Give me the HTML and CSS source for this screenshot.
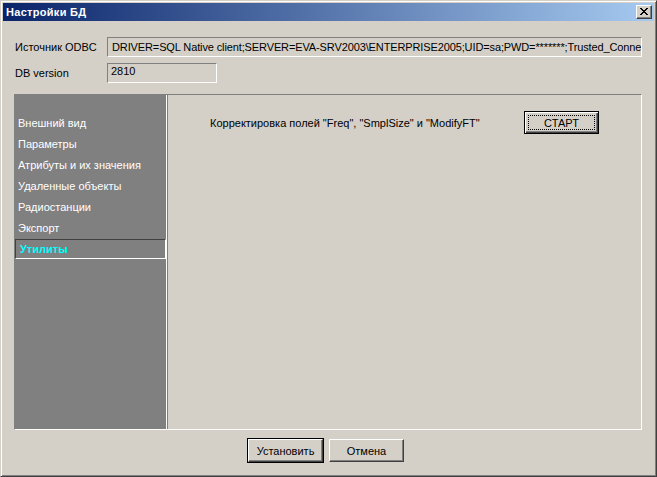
FILE: index.html
```html
<!DOCTYPE html>
<html>
<head>
    <title>Настройки БД</title>
    <link rel="stylesheet" href="styles.css">
</head>
<body>

<div class="window">
    <div class="titlebar">
        <span class="title">Настройки БД</span>
        <button class="close-btn">
            <svg width="8" height="7" viewBox="0 0 8 7" shape-rendering="crispEdges">
                <path d="M0 0h2v1H0z M6 0h2v1H6z M1 1h2v1H1z M5 1h2v1H5z M2 2h4v1H2z M3 3h2v1H3z M2 4h4v1H2z M1 5h2v1H1z M5 5h2v1H5z M0 6h2v1H0z M6 6h2v1H6z" fill="#000"/>
            </svg>
        </button>
    </div>

    <div class="content">
        <div class="field">
            <label class="field-label">Источник ODBC</label>
            <div class="readonly-box odbc">DRIVER=SQL Native client;SERVER=EVA-SRV2003\ENTERPRISE2005;UID=sa;PWD=*******;Trusted_Conne</div>
        </div>
        <div class="field version-field">
            <label class="field-label">DB version</label>
            <div class="readonly-box version">2810</div>
        </div>

        <div class="panel">
            <ul class="nav-list">
                <li class="nav-item">Внешний вид</li>
                <li class="nav-item">Параметры</li>
                <li class="nav-item">Атрибуты и их значения</li>
                <li class="nav-item">Удаленные объекты</li>
                <li class="nav-item">Радиостанции</li>
                <li class="nav-item">Экспорт</li>
                <li class="nav-item selected">Утилиты</li>
            </ul>
            <div class="pane">
                <div class="tool-row">
                    <span class="tool-label">Корректировка полей "Freq", "SmplSize" и "ModifyFT"</span>
                    <button class="btn start-btn"><span class="focus-rect">СТАРТ</span></button>
                </div>
            </div>
        </div>

        <div class="buttons">
            <button class="btn default-btn">Установить</button>
            <button class="btn">Отмена</button>
        </div>
    </div>
</div>

</body>
</html>
```

FILE: styles.css
```css
body {
    margin: 0;
    background-color: #d4d0c8;
    font-family: "Liberation Sans", Arial, sans-serif;
    font-size: 11px;
    color: #000;
}
.window {
    width: 657px;
    height: 477px;
    box-sizing: border-box;
    border: 1px solid;
    border-color: #d4d0c8 #404040 #404040 #d4d0c8;
    box-shadow: inset 1px 1px #ffffff, inset -1px -1px #808080;
    padding: 2px;
    background-color: #d4d0c8;
    display: flex;
    flex-direction: column;
}
.titlebar {
    height: 18px;
    display: flex;
    align-items: center;
    justify-content: space-between;
    padding-left: 3px;
    padding-right: 2px;
    background: linear-gradient(to right, #0a246a, #a6caf0);
}
.title {
    color: #ffffff;
    font-weight: bold;
    font-size: 11px;
    letter-spacing: 0.3px;
}
.close-btn {
    width: 16px;
    height: 14px;
    padding: 0;
    margin: 0;
    box-sizing: border-box;
    border: 1px solid;
    border-color: #ffffff #404040 #404040 #ffffff;
    box-shadow: inset -1px -1px #808080;
    background-color: #d4d0c8;
    display: flex;
    align-items: center;
    justify-content: center;
}
.close-btn svg {
    display: block;
    margin-left: -1px;
    margin-top: -1px;
}
.content {
    flex: 1;
    padding: 16px 12px 0 11px;
    display: flex;
    flex-direction: column;
}
.field {
    display: flex;
    align-items: center;
    height: 20px;
}
.version-field {
    margin-top: 6px;
}
.field-label {
    width: 92px;
    padding-left: 1px;
}
.readonly-box {
    height: 20px;
    box-sizing: border-box;
    border: 1px solid;
    border-color: #808080 #ffffff #ffffff #808080;
    padding: 0 4px;
    white-space: nowrap;
    overflow: hidden;
}
.odbc {
    width: 535px;
    line-height: 18px;
    padding-right: 0;
    letter-spacing: -0.12px;
}
.version {
    width: 110px;
    line-height: 14px;
    padding-left: 3px;
}
.panel {
    margin-top: 11px;
    height: 336px;
    box-sizing: border-box;
    border: 1px solid;
    border-color: #808080 #ffffff #ffffff #808080;
    display: flex;
}
.nav-list {
    list-style: none;
    margin: 0;
    padding: 18px 0 0 0;
    width: 152px;
    box-sizing: border-box;
    background-color: #808080;
    border-right: 1px solid #ffffff;
}
.nav-item {
    height: 21px;
    line-height: 21px;
    padding-left: 3px;
    color: #ffffff;
    white-space: nowrap;
}
.nav-item.selected {
    height: 20px;
    line-height: 18px;
    box-sizing: border-box;
    border: 1px solid;
    border-color: #404040 #ffffff #ffffff #404040;
    padding-left: 4px;
    color: #00ffff;
    font-weight: bold;
}
.pane {
    flex: 1;
    border-left: 1px solid #808080;
    padding: 16px 0 0 42px;
}
.tool-row {
    display: flex;
    align-items: center;
}
.tool-label {
    width: 314px;
    white-space: nowrap;
}
.btn {
    width: 75px;
    height: 23px;
    box-sizing: border-box;
    padding: 0;
    margin: 0;
    font-family: "Liberation Sans", Arial, sans-serif;
    font-size: 11px;
    color: #000;
    background-color: #d4d0c8;
    border: 1px solid;
    border-color: #ffffff #404040 #404040 #ffffff;
    box-shadow: inset -1px -1px #808080;
}
.start-btn {
    border: 1px solid #000;
    box-shadow: inset 1px 1px #ffffff, inset -1px -1px #404040, inset -2px -2px #808080;
    padding: 3px;
}
.focus-rect {
    display: flex;
    align-items: center;
    justify-content: center;
    height: 100%;
    box-sizing: border-box;
    border: 1px dotted #000;
}
.default-btn {
    outline: 1px solid #000;
}
.buttons {
    display: flex;
    gap: 6px;
    margin-top: 9px;
    padding-left: 234px;
}
```
